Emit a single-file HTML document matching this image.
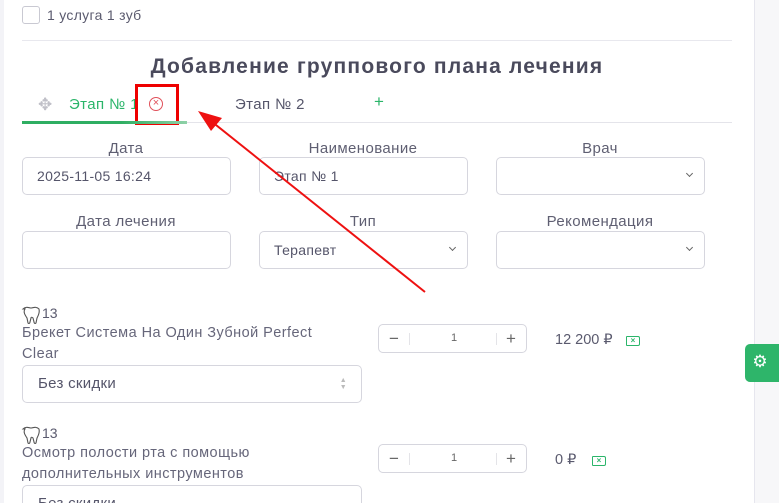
<!DOCTYPE html>
<html><head><meta charset="utf-8"><style>
*{box-sizing:border-box;margin:0;padding:0}
html,body{width:779px;height:503px;overflow:hidden}
body{background:#fff;font-family:"Liberation Sans","DejaVu Sans",sans-serif;color:#5a5a6e;position:relative}
.a{position:absolute}
.inp{position:absolute;border:1px solid #d6d6de;border-radius:5px;height:38px;background:#fff;font-size:14px;color:#55556a;padding:10px 14px;letter-spacing:0.3px}
.lbl{position:absolute;font-size:15px;color:#5f5f72;text-align:center;width:208px;letter-spacing:0.4px}
.chev{position:absolute;right:12px;top:13px;width:5px;height:5px;border-right:1.2px solid #666;border-bottom:1.2px solid #666;transform:rotate(45deg)}
.step{position:absolute;width:149px;height:29px;border:1px solid #d6d6de;border-radius:5px}
.step span{position:absolute;font-size:17px;color:#666;line-height:27px;top:0}
.txt{font-size:14.5px;color:#66667a;line-height:21px;letter-spacing:0.45px}
</style></head><body>
<div class="a" style="left:0;top:0;width:4px;height:503px;background:#f3f3f7"></div>
<div class="a" style="left:754px;top:0;width:25px;height:503px;background:#f7f7f9;border-left:1px solid #e6e6ee"></div>
<div class="a" style="left:22px;top:6px;width:18px;height:18px;border:1px solid #c9c9d2;border-radius:3px"></div>
<div class="a" style="left:47px;top:7px;font-size:14px;color:#5a5a6e;letter-spacing:0.3px">1 услуга 1 зуб</div>
<div class="a" style="left:22px;top:40px;width:710px;height:1px;background:#e8e8ee"></div>
<div class="a" style="left:0;width:754px;top:55px;text-align:center;font-size:21px;font-weight:bold;color:#4a4a5c;letter-spacing:1.2px">Добавление группового плана лечения</div>
<div class="a" style="left:38px;top:95px;font-size:17px;color:#c0c0c8">✥</div>
<div class="a" style="left:69px;top:96px;font-size:15px;color:#2bb56a;letter-spacing:0.4px">Этап № 1</div>
<div class="a" style="left:149px;top:97px;width:14px;height:14px;border:1.4px solid #e0505a;border-radius:50%;color:#e0505a;font-size:11px;line-height:11px;text-align:center">×</div>
<div class="a" style="left:135px;top:84px;width:44px;height:41px;border:3px solid #ee0000"></div>
<div class="a" style="left:235px;top:96px;font-size:15px;color:#55556a;letter-spacing:0.4px">Этап № 2</div>
<div class="a" style="left:374px;top:92px;font-size:17px;color:#2bb56a">+</div>
<div class="a" style="left:22px;top:122px;width:710px;height:1px;background:#e4e4ea"></div>
<div class="a" style="left:22px;top:121px;width:165px;height:3px;background:linear-gradient(90deg,#2fae62,#2fae62 60%,#8fd1a8)"></div>

<div class="lbl" style="left:22px;top:140px">Дата</div>
<div class="lbl" style="left:259px;top:140px">Наименование</div>
<div class="lbl" style="left:496px;top:140px">Врач</div>
<div class="inp" style="left:22px;top:157px;width:209px">2025-11-05 16:24</div>
<div class="inp" style="left:259px;top:157px;width:209px">Этап № 1</div>
<div class="inp" style="left:496px;top:157px;width:209px"><div class="chev"></div></div>
<div class="lbl" style="left:22px;top:213px">Дата лечения</div>
<div class="lbl" style="left:259px;top:213px">Тип</div>
<div class="lbl" style="left:496px;top:213px">Рекомендация</div>
<div class="inp" style="left:22px;top:231px;width:209px"></div>
<div class="inp" style="left:259px;top:231px;width:209px">Терапевт<div class="chev"></div></div>
<div class="inp" style="left:496px;top:231px;width:209px"><div class="chev"></div></div>

<svg class="a" style="left:0;top:0" width="779" height="503"><line x1="425" y1="292" x2="206" y2="117" stroke="#ee1111" stroke-width="2"/><polygon points="198,111 222,118 211,131" fill="#ee1111"/>
<path d="M23 309c3-3 6-1 8-1s5-2 8 1c1 4-1 7-2 9l-1 5c-1 1-2 0-2-1l-1-4c-1-1-2-1-2 0l-1 4c0 1-1 2-2 1l-1-5c-2-3-4-6-2-9z" fill="none" stroke="#555" stroke-width="1.1"/>
<path d="M23 429c3-3 6-1 8-1s5-2 8 1c1 4-1 7-2 9l-1 5c-1 1-2 0-2-1l-1-4c-1-1-2-1-2 0l-1 4c0 1-1 2-2 1l-1-5c-2-3-4-6-2-9z" fill="none" stroke="#555" stroke-width="1.1"/>
</svg>
<div class="a" style="left:42px;top:305px;font-size:14px;color:#5a5a6e">13</div>
<div class="a txt" style="left:22px;top:323px;width:310px">Брекет Система На Один Зубной Perfect Clear</div>
<div class="inp" style="left:22px;top:365px;width:340px;font-size:15px;padding:9px 15px">Без скидки<span style="position:absolute;right:14px;top:11px;font-size:7px;color:#bbb;line-height:7px">▲<br>▼</span></div>
<div class="step" style="left:378px;top:324px"><span style="left:10px">−</span><span style="left:72px;font-size:11px">1</span><span style="left:127px">+</span><div class="a" style="left:30px;top:8px;width:1px;height:12px;background:#e4e4e8"></div><div class="a" style="left:117px;top:8px;width:1px;height:12px;background:#e4e4e8"></div></div>
<div class="a" style="left:555px;top:332px;font-size:14.5px;color:#5a5a6e">12 200 ₽</div>
<div class="a" style="left:626px;top:336px;width:14px;height:10px;border:1.5px solid #2bb56a;border-radius:1px 2px 2px 1px;font-size:8px;color:#2bb56a;text-align:center;line-height:7px;font-weight:bold">×</div>
<div class="a" style="left:42px;top:425px;font-size:14px;color:#5a5a6e">13</div>
<div class="a txt" style="left:22px;top:443px;width:320px">Осмотр полости рта с помощью дополнительных инструментов</div>
<div class="inp" style="left:22px;top:485px;width:340px;font-size:15px;padding:9px 15px">Без скидки</div>
<div class="step" style="left:378px;top:444px"><span style="left:10px">−</span><span style="left:72px;font-size:11px">1</span><span style="left:127px">+</span><div class="a" style="left:30px;top:8px;width:1px;height:12px;background:#e4e4e8"></div><div class="a" style="left:117px;top:8px;width:1px;height:12px;background:#e4e4e8"></div></div>
<div class="a" style="left:555px;top:452px;font-size:14.5px;color:#5a5a6e">0 ₽</div>
<div class="a" style="left:592px;top:456px;width:14px;height:10px;border:1.5px solid #2bb56a;border-radius:1px 2px 2px 1px;font-size:8px;color:#2bb56a;text-align:center;line-height:7px;font-weight:bold">×</div>
<div class="a" style="left:745px;top:344px;width:34px;height:38px;background:#2eb56a;border-radius:5px 0 0 5px;color:#fff;font-size:17px;text-align:center;line-height:36px;padding-right:4px">⚙</div>
</body></html>
